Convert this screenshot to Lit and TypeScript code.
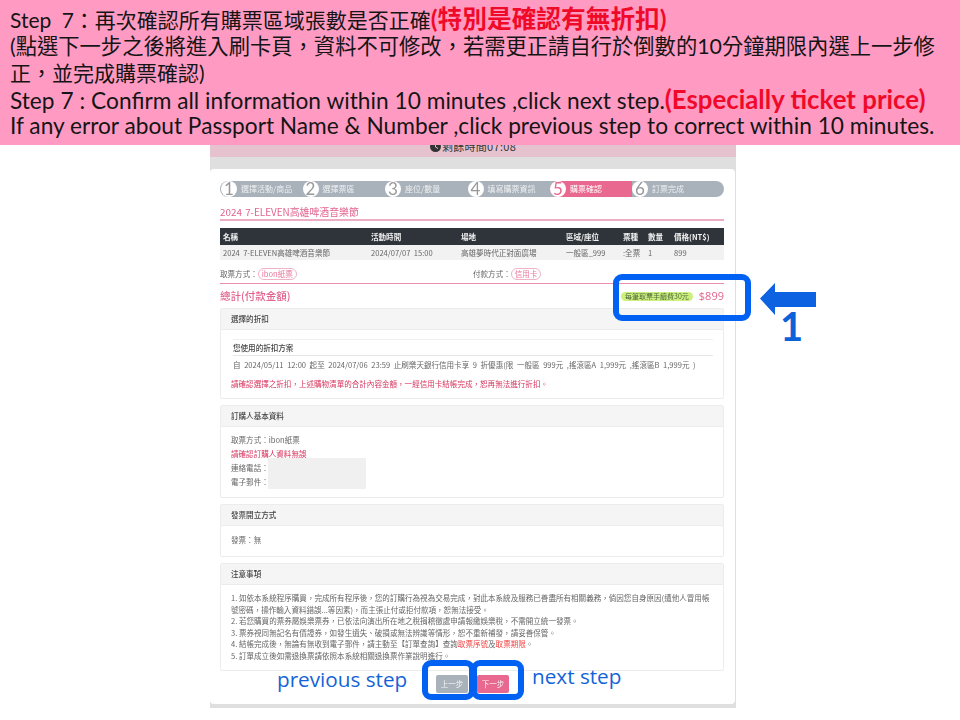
import { LitElement, html, css } from "lit";
import { customElement } from "lit/decorators.js";

const steps = [
  ["1", "選擇活動/商品"],
  ["2", "選擇票區"],
  ["3", "座位/數量"],
  ["4", "填寫購票資訊"],
  ["5", "購票確認"],
  ["6", "訂票完成"],
];

@customElement("app-root")
export class AppRoot extends LitElement {
  static styles = css`
    :host {
      display: block;
      position: relative;
      width: 960px;
      height: 720px;
      overflow: hidden;
      background: #fff;
      font-family: "Noto Sans CJK TC", "Noto Sans", sans-serif;
    }
    .banner {
      position: relative;
      z-index: 2;
      height: 145px;
      box-sizing: border-box;
      padding: 6px 10px 0;
      background: #ff9bc3;
      color: #151515;
      font-family: Lato, "Noto Sans CJK TC", sans-serif;
      font-size: 22.7px;
      line-height: 26.8px;
    }
    .banner div { white-space: nowrap; height: 26.8px; }
    .banner .zh { font-size: 21px; }
    .banner .w { word-spacing: 5px; }
    .banner .zh2 { font-size: 21.3px; }
    .banner b { color: #f00a2a; font-weight: 700; font-size: 24.7px; }
    .banner .en { word-spacing: 0.1px; }
    .banner .en b { font-size: 25.8px; }
    .page {
      width: 526px;
      margin-left: 210px;
      height: 563px;
      background: #dfdfdf;
      display: flex;
      flex-direction: column;
    }
    .timer {
      height: 12px;
      flex: none;
      background: #e6c2cf;
      display: flex;
      justify-content: center;
      align-items: flex-start;
      gap: 1px;
      color: #333;
      font-size: 11px;
      line-height: 12px;
      letter-spacing: 0.3px;
    }
    .timer span { margin-top: -5px; }
    .clock { width: 11px; height: 11px; margin-top: -4px; flex: none; }
    .gap { height: 12px; flex: none; }
    .card {
      width: 525px;
      height: 535px;
      flex: none;
      box-sizing: border-box;
      background: #fff;
      border-radius: 4px;
      padding: 12px 11px 0 10px;
      color: #666;
      font-size: 7.55px;
      line-height: 11.6px;
      filter: blur(0.3px);
    }
    .steps {
      display: flex;
      height: 16px;
      border-radius: 8px;
      background: #a9b2ba;
      color: #eef0f2;
    }
    .step {
      width: 82.5px;
      flex: none;
      display: flex;
      align-items: center;
      gap: 4px;
      font-size: 8px;
      white-space: nowrap;
    }
    .step:last-child { flex: 1; }
    .step.on { background: #e9688f; color: #fff; width: 82px; border-radius: 8px 0 0 8px; }
    .num {
      width: 16px;
      height: 16px;
      border-radius: 50%;
      background: #fff;
      color: #999;
      font: 17px/16px Lato, sans-serif;
      text-align: center;
      flex: none;
    }
    .first { margin-left: 1px; width: 81.5px; }
    .step.on .num { color: #e9688f; }
    .title {
      margin-top: 8px;
      height: 16px;
      box-sizing: border-box;
      border-bottom: 2px solid #edaec4;
      color: #e2648e;
      font-size: 9.9px;
      line-height: 14px;
      word-spacing: 1px;
    }
    .tbl {
      margin-top: 7px;
      display: grid;
      grid-template-columns: 148px 90px 105px 57px 25px 26px 53px;
      line-height: 15px;
    }
    .tbl > div { padding-left: 3px; white-space: pre; }
    .th { background: #2f343a; color: #f0f0f0; font-weight: 700; height: 17px; line-height: 17px; }
    .td { background: #f2f2f2; color: #666; height: 15px; }
    .pay { display: flex; margin-top: 7px; height: 13px; align-items: center; white-space: nowrap; }
    .pay .l { width: 253px; flex: none; }
    .pill {
      display: inline-block;
      border: 1px solid #efb3c6;
      border-radius: 7px;
      color: #e9789c;
      padding: 0 3px;
      line-height: 10px;
    }
    .total {
      margin-top: 3px;
      border-top: 1px solid #ec8fae;
      height: 24px;
      display: flex;
      align-items: center;
      color: #e2648e;
    }
    .total .big { font-size: 10.5px; font-weight: 500; flex: 1; }
    .fee { background: #cdf07c; border-radius: 5px; color: #4d6640; padding: 0 4px; line-height: 9px; font-size: 7px; margin-right: 6px; }
    .price { font: 11px/14px "Open Sans", sans-serif; }
    .panel {
      margin-bottom: 6px;
      border: 1px solid #ececec;
      border-radius: 2px;
      box-sizing: border-box;
    }
    .ph {
      background: #f5f5f5;
      border-bottom: 1px solid #ececec;
      color: #444;
      font-weight: 500;
      height: 20px;
      line-height: 19px;
      padding-left: 10px;
    }
    .pb { padding: 0 10px; }
    .p1 { height: 91px; }
    .p2 { height: 93px; }
    .p3 { height: 53px; }
    .p4 { height: 108px; }
    .plan {
      margin: 9px 0 0 2px;
      box-sizing: border-box;
      border-top: 1px solid #f0f0f0;
      border-bottom: 1px solid #e6e6e6;
      height: 17px;
      line-height: 15px;
      color: #444;
      font-weight: 500;
    }
    .planline { margin-left: 2px; line-height: 17px; white-space: nowrap; word-spacing: 1.9px; }
    .warn { color: #d7365f; margin-top: 5px; white-space: nowrap; }
    .info { padding-top: 6px; line-height: 14px; position: relative; }
    .red { color: #d7365f; }
    .mask { position: absolute; left: 47px; top: 31px; width: 98px; height: 31px; background: #f0f0f0; }
    .inv { padding-top: 7px; line-height: 14px; }
    .notes { padding-top: 7px; white-space: nowrap; line-height: 11.5px; }
    .hl { color: #f04040; }
    .btns { display: flex; gap: 9px; margin: -2px 0 0 216px; }
    .btn {
      width: 32px;
      height: 18px;
      border-radius: 2px;
      text-align: center;
      line-height: 18px;
      color: #f4f4f4;
      background: #a9b2ba;
    }
    .btn.next { background: #e9688f; }

    .ring {
      position: absolute;
      z-index: 3;
      box-sizing: border-box;
      border: 6px solid #0061f2;
      border-radius: 9px;
    }
    .r1 { left: 613px; top: 274px; width: 138px; height: 47px; }
    .r2 { left: 422px; top: 660px; width: 53px; height: 40px; }
    .r3 { left: 471px; top: 660px; width: 53px; height: 40px; }
    .arrow { position: absolute; z-index: 3; left: 760px; top: 283px; }
    .one {
      position: absolute;
      z-index: 3;
      left: 780px;
      top: 303px;
      color: #0c62d8;
      font: 700 40px/46px Lato, sans-serif;
    }
    .lab {
      position: absolute;
      z-index: 3;
      color: #1463d6;
      font: 20.7px/26px "Open Sans", sans-serif;
      white-space: nowrap;
    }
    .l1 { left: 277px; top: 666px; }
    .l2 { left: 532px; top: 663px; }
  `;

  render() {
    return html`
      <div class="banner">
        <div class="zh w">Step 7：再次確認所有購票區域張數是否正確<b>(特別是確認有無折扣)</b></div>
        <div class="zh2">(點選下一步之後將進入刷卡頁，資料不可修改，若需更正請自行於倒數的10分鐘期限內選上一步修</div>
        <div class="zh">正，並完成購票確認)</div>
        <div class="en">Step 7 : Confirm all information within 10 minutes ,click next step.<b>(Especially ticket price)</b></div>
        <div>If any error about Passport Name &amp; Number ,click previous step to correct within 10 minutes.</div>
      </div>

      <div class="page">
        <div class="timer">
          <svg class="clock" viewBox="0 0 11 11">
            <circle cx="5.5" cy="5.5" r="5.5" fill="#333" />
            <path d="M5.5 2.5V6L8 7.5" fill="none" stroke="#e6c2cf" stroke-width="1" />
          </svg>
          <span>剩餘時間07:08</span>
        </div>
        <div class="gap"></div>
        <div class="card">
          <div class="steps">
            ${steps.map(
              ([n, t], i) => html`<div class="step ${i === 4 ? "on" : ""} ${i === 0 ? "first" : ""}">
                <span class="num">${n}</span><span>${t}</span>
              </div>`
            )}
          </div>
          <div class="title">2024 7-ELEVEN高雄啤酒音樂節</div>
          <div class="tbl">
            <div class="th">名稱</div><div class="th">活動時間</div><div class="th">場地</div>
            <div class="th">區域/座位</div><div class="th">票種</div><div class="th">數量</div><div class="th">價格(NT$)</div>
            <div class="td">2024  7-ELEVEN高雄啤酒音樂節</div><div class="td">2024/07/07  15:00</div><div class="td">高雄夢時代正對面廣場</div>
            <div class="td">一般區_999</div><div class="td">:全票</div><div class="td">1</div><div class="td">899</div>
          </div>
          <div class="pay">
            <div class="l">取票方式：<span class="pill">ibon紙票</span></div>
            <div>付款方式：<span class="pill">信用卡</span></div>
          </div>
          <div class="total">
            <span class="big">總計(付款金額)</span>
            <span class="fee">每筆取票手續費30元</span>
            <span class="price">$899</span>
          </div>

          <div class="panel p1">
            <div class="ph">選擇的折扣</div>
            <div class="pb">
              <div class="plan">您使用的折扣方案</div>
              <div class="planline">自 2024/05/11 12:00 起至 2024/07/06 23:59 止刷樂天銀行信用卡享 9 折優惠(限 一般區 999元 ,搖滾區A 1,999元 ,搖滾區B 1,999元 )</div>
              <div class="warn">請確認選擇之折扣，上述購物清單的合計內容金額，一經信用卡結帳完成，恕再無法進行折扣。</div>
            </div>
          </div>

          <div class="panel p2">
            <div class="ph">訂購人基本資料</div>
            <div class="pb info">
              <div>取票方式：ibon紙票</div>
              <div class="red">請確認訂購人資料無誤</div>
              <div>連絡電話：</div>
              <div>電子郵件：</div>
              <div class="mask"></div>
            </div>
          </div>

          <div class="panel p3">
            <div class="ph">發票開立方式</div>
            <div class="pb inv">發票：無</div>
          </div>

          <div class="panel p4">
            <div class="ph">注意事項</div>
            <div class="pb notes">
              <div>1. 如依本系統程序購買，完成所有程序後，您的訂購行為視為交易完成，對此本系統及服務已善盡所有相關義務，倘因您自身原因(遭他人冒用帳</div>
              <div>號密碼，操作輸入資料錯誤...等因素)，而主張止付或拒付款項，恕無法接受。</div>
              <div>2. 若您購買的票券屬娛樂票券，已依法向演出所在地之稅捐稽徵處申請報繳娛樂稅，不需開立統一發票。</div>
              <div>3. 票券視同無記名有價證券，如發生遺失、破損或無法辨識等情形，恕不重新補發，請妥善保管。</div>
              <div>4. 結帳完成後，無論有無收到電子郵件，請主動至【訂單查詢】查詢<span class="hl">取票序號</span>及<span class="hl">取票期限</span>。</div>
              <div>5. 訂單成立後如需退換票請依照本系統相關退換票作業說明進行。</div>
            </div>
          </div>

          <div class="btns">
            <div class="btn">上一步</div>
            <div class="btn next">下一步</div>
          </div>
        </div>
      </div>

      <div class="ring r1"></div>
      <div class="ring r2"></div>
      <div class="ring r3"></div>
      <svg class="arrow" width="57" height="32" viewBox="0 0 57 32">
        <path d="M0 15.5 L15 0 V9 H56 V24 H15 V32 Z" fill="#0c62e0" />
      </svg>
      <div class="one">1</div>
      <div class="lab l1">previous step</div>
      <div class="lab l2">next step</div>
    `;
  }
}
